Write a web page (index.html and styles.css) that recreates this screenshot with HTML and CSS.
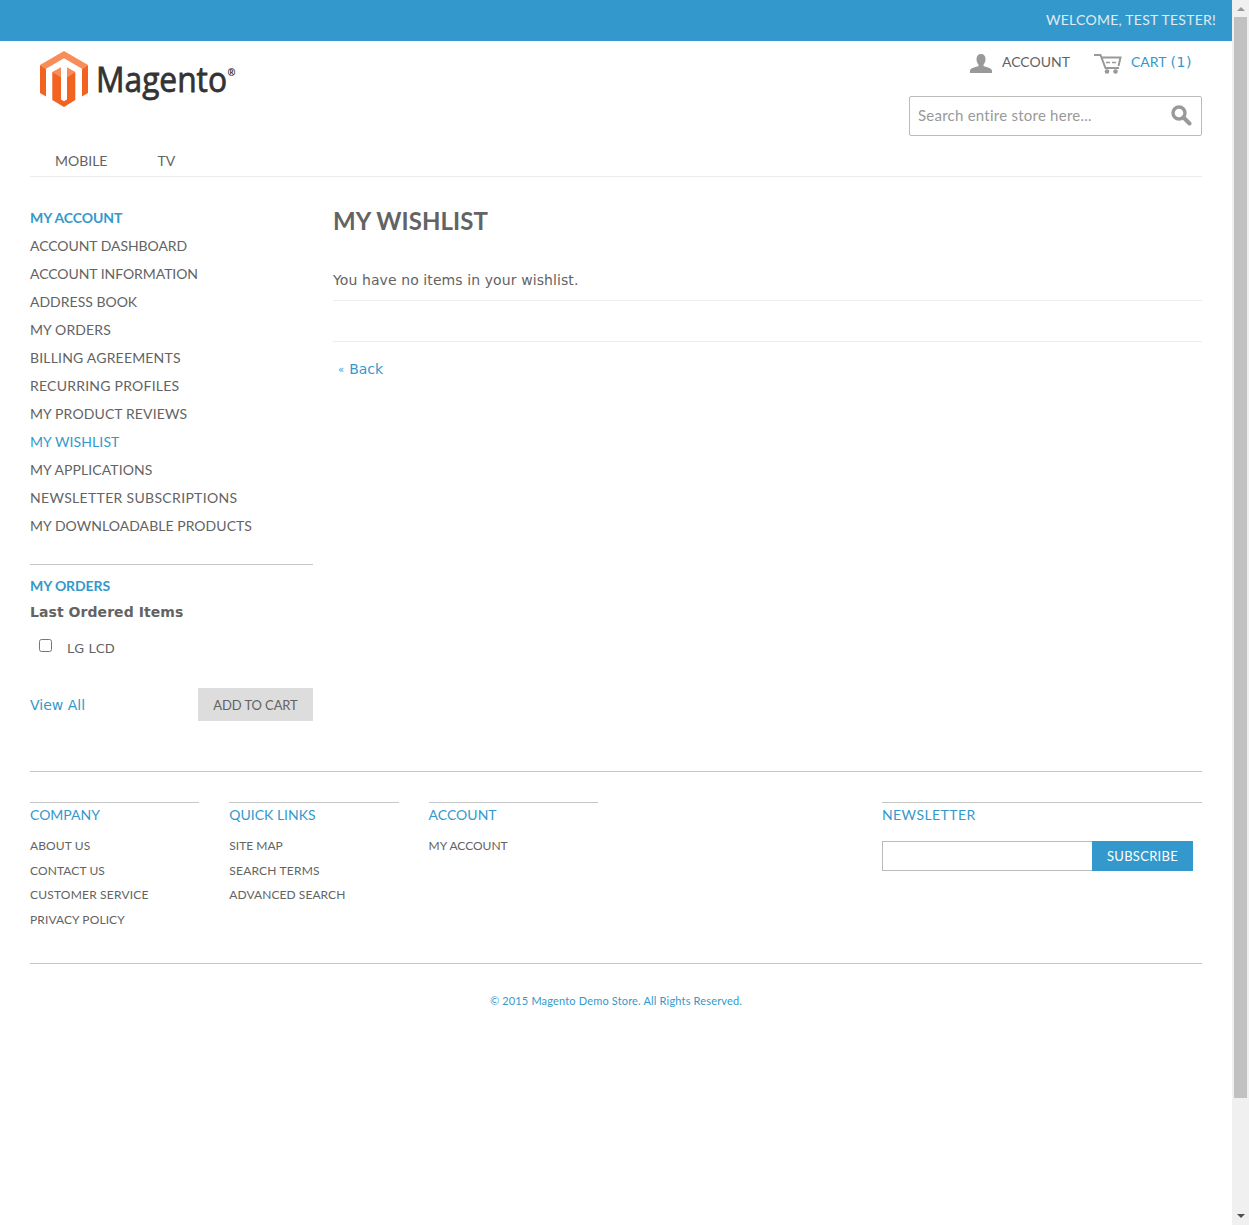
FILE: index.html
```html
<!DOCTYPE html>
<html lang="en">
<head>
<meta charset="utf-8">
<title>My Wishlist</title>
<link rel="stylesheet" href="styles.css">
</head>
<body>
<div class="window">
<div class="page">
  <div class="topbar"><span class="t-welcome">WELCOME, TEST TESTER!</span></div>
  <div class="container">
    <header class="header">
      <div class="header-main">
        <a class="logo">
          <svg width="200" height="60" viewBox="0 0 200 60">
            <path d="M24 0 48 14 42 17.700 24 7.300 6 17.700 0 14Z" fill="#f98d57"/>
            <path d="M0 14 6 17.700V45.500L0 42ZM48 14 42 17.700V45.500L48 42Z" fill="#f26322"/>
            <path d="M12.300 21.300 21 16.500V48.500L24 50.300 27 48.500V16.500L35.300 21.300V49L24 56 12.300 49Z" fill="#f26322"/>
            <path d="M12.300 21.300 21 16.500V26.500ZM35.300 21.300 27 16.500V26.500Z" fill="#f98d57"/>
            <text class="logo-word" x="56" y="41" textLength="131" lengthAdjust="spacingAndGlyphs">Magento</text>
            <text class="logo-reg" x="187.500" y="25" textLength="8" lengthAdjust="spacingAndGlyphs">®</text>
          </svg>
        </a>
        <div class="header-tools">
          <div class="links">
            <a class="account"><svg width="22" height="19" viewBox="0 0 22 19"><path d="M11 0C14 0 15.500 2 15.500 5C15.500 8 14.300 9.500 13.500 10.800V12C16 13 22 14 22 16.500V19H0V16.500C0 14 6 13 8.500 12V10.800C7.700 9.500 6.500 8 6.500 5C6.500 2 8 0 11 0Z" fill="#999"/></svg><span class="t-account">ACCOUNT</span></a>
            <a class="cart"><svg width="28" height="20" viewBox="0 0 28 20" fill="none" stroke="#999" stroke-width="2"><path d="M0 1H6.500L11.500 14H25M8 3.500H26.500L24.500 12"/><path d="M12 8.500H16M18 8.500H22" stroke-width="1.700"/><circle cx="13" cy="17.500" r="2.300" fill="#999" stroke="none"/><circle cx="21.500" cy="17.500" r="2.300" fill="#999" stroke="none"/></svg><span class="t-cart">CART</span><span class="count">(1)</span></a>
          </div>
          <div class="search"><span class="t-search">Search entire store here...</span><svg width="21" height="21" viewBox="0 0 21 21" fill="none" stroke="#999"><circle cx="8" cy="8" r="6" stroke-width="3.400"/><path d="M12.500 12.500 18.500 18.500" stroke-width="4" stroke-linecap="round"/></svg></div>
        </div>
      </div>
      <nav class="nav"><a class="t-mobile">MOBILE</a><a class="t-tv">TV</a></nav>
    </header>
    <div class="columns">
      <aside class="sidebar">
        <h2 class="block-title t-myaccount">MY ACCOUNT</h2>
        <ul class="menu">
          <li><span class="m1">ACCOUNT DASHBOARD</span></li>
          <li><span class="m2">ACCOUNT INFORMATION</span></li>
          <li><span class="m3">ADDRESS BOOK</span></li>
          <li><span class="m4">MY ORDERS</span></li>
          <li><span class="m5">BILLING AGREEMENTS</span></li>
          <li><span class="m6">RECURRING PROFILES</span></li>
          <li><span class="m7">MY PRODUCT REVIEWS</span></li>
          <li class="current"><span class="m8">MY WISHLIST</span></li>
          <li><span class="m9">MY APPLICATIONS</span></li>
          <li><span class="m10">NEWSLETTER SUBSCRIPTIONS</span></li>
          <li><span class="m11">MY DOWNLOADABLE PRODUCTS</span></li>
        </ul>
        <section class="orders">
          <h2 class="block-title t-orders">MY ORDERS</h2>
          <h3 class="sub"><span>Last Ordered Items</span></h3>
          <label class="item"><input type="checkbox"><span>LG LCD</span></label>
          <div class="actions"><a class="viewall">View All</a><button class="add"><span class="t-add">ADD TO CART</span></button></div>
        </section>
      </aside>
      <main class="main">
        <h1><span class="t-title">MY WISHLIST</span></h1>
        <p class="empty"><span>You have no items in your wishlist.</span></p>
        <div class="buttons"></div>
        <a class="back"><small>«</small><span>Back</span></a>
      </main>
    </div>
    <footer class="footer">
      <div class="footer-cols">
        <section class="fcol"><h4><span class="f1">COMPANY</span></h4><ul><li><span class="f2">ABOUT US</span></li><li><span class="f3">CONTACT US</span></li><li><span class="f4">CUSTOMER SERVICE</span></li><li><span class="f5">PRIVACY POLICY</span></li></ul></section>
        <section class="fcol"><h4><span class="f6">QUICK LINKS</span></h4><ul><li><span class="f7">SITE MAP</span></li><li><span class="f8">SEARCH TERMS</span></li><li><span class="f9">ADVANCED SEARCH</span></li></ul></section>
        <section class="fcol"><h4><span class="f10">ACCOUNT</span></h4><ul><li><span class="f11">MY ACCOUNT</span></li></ul></section>
        <section class="news"><h4><span class="f12">NEWSLETTER</span></h4><div class="subscribe"><input type="text"><button><span class="f13">SUBSCRIBE</span></button></div></section>
      </div>
      <p class="copy"><span class="t-copy">© 2015 Magento Demo Store. All Rights Reserved.</span></p>
    </footer>
  </div>
</div>
<div class="scrollbar"><i class="up"></i><div class="thumb"></div><i class="down"></i></div>
</div>
</body>
</html>
```
FILE: styles.css
```css
* { box-sizing: border-box; }
body { margin: 0; background: #fff; color: #636363; font: 14px/20px Lato, sans-serif; }
h1, h2, h3, h4, p, ul { margin: 0; padding: 0; font-weight: 400; }
ul { list-style: none; }
button { border: 0; padding: 0; font-family: Lato, sans-serif; }
svg { display: block; flex: none; }
span { white-space: nowrap; }
.window { display: flex; height: 1225px; overflow: hidden; }
.page { width: 1232px; }
.topbar { height: 41px; background: #3399cc; color: #e0ebf0; padding: 10px 16px 0; text-align: right; }
.container { margin: 0 30px; }
.header { height: 136px; border-bottom: 1px solid #ededed; }
.header-main { display: flex; justify-content: space-between; height: 110px; }
.logo { padding: 10px 0 0 10px; }
.logo-word { font: 400 35px "Open Sans", sans-serif; fill: #333; stroke: #333; stroke-width: .8px; }
.logo-reg { font: 700 11px "Open Sans", sans-serif; fill: #111; }
.header-tools { width: 293px; }
.links { display: flex; padding: 11px 0 0 61px; height: 55px; }
.account, .cart { display: flex; align-items: flex-start; }
.account { width: 124px; gap: 10px; }
.account svg { margin-top: 2px; }
.cart { color: #3399cc; }
.cart svg { margin: 2px 9px 0 0; }
.count { font-family: "DejaVu Sans", sans-serif; margin-left: 4px; letter-spacing: .6px; }
.search { display: flex; justify-content: space-between; height: 40px; border: 1px solid #bbb; border-radius: 2px; padding: 8px 9px 0 8px; font-size: 15px; line-height: 21px; color: #999; }
.nav { display: flex; gap: 50px; padding-left: 25px; }
.columns { display: flex; gap: 20px; height: 594px; padding-top: 31px; }
.sidebar { width: 283px; }
.block-title { font-size: 14px; font-weight: 700; line-height: 20px; color: #3399cc; letter-spacing: -.08px; }
.menu { padding-top: 4px; }
.menu li { height: 28px; line-height: 28px; }
.menu .current { color: #3399cc; }
.orders { border-top: 1px solid #c7c7c7; margin-top: 24px; padding-top: 11px; font-family: "DejaVu Sans", sans-serif; }
.orders .block-title { font-family: Lato, sans-serif; }
.sub { font-size: 14px; font-weight: 700; line-height: 20px; margin-top: 6px; letter-spacing: .06px; }
.item { display: flex; margin-top: 17px; font-size: 13px; }
.item input { width: 13px; height: 13px; margin: 0 15px 0 9px; }
.item span { line-height: 20px; }
.actions { display: flex; justify-content: space-between; margin-top: 29px; color: #3399cc; line-height: 34px; }
.add { width: 115px; height: 33px; background: #ddd; color: #636363; font-size: 13px; }
.main { width: 869px; font-family: "DejaVu Sans", sans-serif; }
h1 { font: 700 24px/26px Lato, sans-serif; letter-spacing: .08px; }
.empty { margin-top: 36px; line-height: 20px; letter-spacing: .09px; }
.buttons { height: 42px; margin-top: 10px; border: solid #ededed; border-width: 1px 0; }
.back { display: flex; gap: 5px; margin: 17px 0 0 5px; color: #3399cc; }
.back small { font-size: 10px; line-height: 22px; }
.footer { border-top: 1px solid #c7c7c7; }
.footer-cols { display: flex; gap: 30px; height: 192px; padding-top: 30px; border-bottom: 1px solid #c7c7c7; }
.fcol { width: 169.300px; border-top: 1px solid #c7c7c7; height: 140px; }
.news { width: 320px; margin-left: auto; border-top: 1px solid #c7c7c7; height: 140px; }
h4 { color: #3399cc; font-size: 14px; line-height: 24px; }
.fcol ul { padding-top: 7px; font-size: 12px; }
.fcol li { height: 24.600px; line-height: 24px; }
.subscribe { display: flex; margin-top: 14px; }
.subscribe input { width: 210px; height: 30px; border: 1px solid #bbb; border-right: 0; }
.subscribe button { width: 101px; height: 30px; background: #3399cc; color: #fff; font-size: 13px; }
.copy { text-align: center; padding-top: 27px; color: #3399cc; font-size: 11px; }
.scrollbar { width: 17px; background: #f0f0f0; display: flex; flex-direction: column; align-items: center; }
.up, .down { border: 4px solid transparent; border-top: 0; border-bottom: 4px solid #999; margin: 7px 0 6px; }
.thumb { width: 13px; height: 1081px; background: #c1c1c1; }
.down { border-top: 4px solid #505050; border-bottom: 0; margin: 116px 0 0; }

/* tracking per label */
.t-welcome { letter-spacing: .24px; }
.t-search { letter-spacing: .24px; }
.t-copy { letter-spacing: .17px; }
.t-add { letter-spacing: -.1px; }
.m1, .m2 { letter-spacing: -.06px; }
.m4, .m8, .m7 { letter-spacing: .11px; }
.m5 { letter-spacing: .19px; }
.m6 { letter-spacing: .23px; }
.m9 { letter-spacing: .08px; }
.m10 { letter-spacing: .32px; }
.m11 { letter-spacing: .04px; }
.f2, .f3, .f5 { letter-spacing: .1px; }
.f4, .f8 { letter-spacing: .2px; }
.f9 { letter-spacing: .07px; }
.f12 { letter-spacing: .42px; }
.f13 { letter-spacing: .28px; }
```
